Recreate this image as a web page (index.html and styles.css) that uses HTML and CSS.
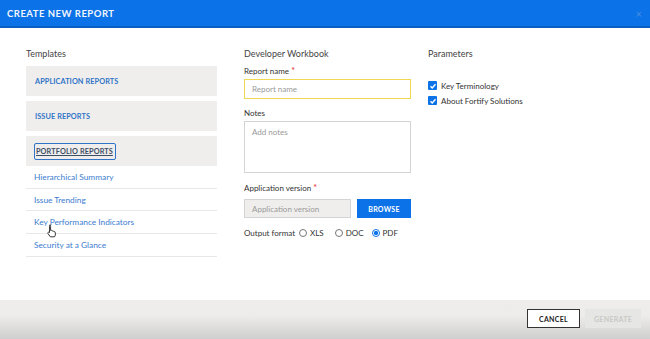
FILE: index.html
```
<!DOCTYPE html>
<html>
<head>
	<title>Create New Report</title>
	<meta charset="utf-8">
	<link rel="stylesheet" href="styles.css">
</head>
<body>
	<div class="dialog">
		<div class="header">
			<h1>Create New Report</h1>
			<span class="close">&times;</span>
		</div>

		<div class="body">
			<div class="col templates">
				<h2>Templates</h2>
				<div class="group">Application Reports</div>
				<div class="group">Issue Reports</div>
				<div class="group open"><span class="focus">Portfolio Reports</span></div>
				<ul class="items">
					<li>Hierarchical Summary</li>
					<li>Issue Trending</li>
					<li class="hover">Key Performance Indicators
						<svg class="cursor" width="12" height="14" viewBox="0 0 12 14">
							<path d="M3.5 1.2c.7 0 1.1.5 1.1 1.1v4.2l.3-.1c.6-.2 1.1.1 1.3.5.5-.3 1.1-.1 1.4.4.5-.2 1.2 0 1.4.6l.3 1.1c.3 1.5 0 2.8-.8 3.8H4.3L2 9.6c-.4-.6-.2-1.2.3-1.4.4-.2.9 0 1.2.3V2.3c0-.6.4-1.1 1-1.1z" fill="#fff" stroke="#222" stroke-width=".9"/>
						</svg>
					</li>
					<li>Security at a Glance</li>
				</ul>
			</div>

			<div class="col form">
				<h2>Developer Workbook</h2>
				<label>Report name <span class="req">*</span></label>
				<div class="input active">Report name</div>
				<label class="notes-label">Notes</label>
				<div class="input textarea">Add notes</div>
				<label class="ver-label">Application version <span class="req">*</span></label>
				<div class="row">
					<div class="input disabled">Application version</div>
					<button class="browse">Browse</button>
				</div>
				<div class="format">
					Output format
					<span class="radio"></span> XLS
					<span class="radio"></span> DOC
					<span class="radio on"></span> PDF
				</div>
			</div>

			<div class="col params">
				<h2>Parameters</h2>
				<div class="check"><span class="box">
					<svg width="8" height="8" viewBox="0 0 8 8"><path d="M1.5 4.2l1.7 1.7 3.3-3.6" fill="none" stroke="#fff" stroke-width="1.4"/></svg>
				</span>Key Terminology</div>
				<div class="check"><span class="box">
					<svg width="8" height="8" viewBox="0 0 8 8"><path d="M1.5 4.2l1.7 1.7 3.3-3.6" fill="none" stroke="#fff" stroke-width="1.4"/></svg>
				</span>About Fortify Solutions</div>
			</div>
		</div>

		<div class="footer">
			<button class="cancel">Cancel</button>
			<button class="generate">Generate</button>
		</div>
	</div>
</body>
</html>
```

FILE: styles.css
```
* {
	box-sizing: border-box;
}

body {
	margin: 0px;
	font-family: "Lato", "Open Sans", sans-serif;
	color: #333;
	background: #fff;
}

.dialog {
	width: 650px;
	height: 339px;
	display: flex;
	flex-direction: column;
}

.header {
	height: 28px;
	background: #0b72e7;
	border-bottom: 2px solid #0a5fc4;
	display: flex;
	align-items: center;
	justify-content: space-between;
	padding: 0px 7px;
}

h1 {
	margin: 0px;
	font-size: 9.5px;
	font-weight: 700;
	letter-spacing: 0.5px;
	text-transform: uppercase;
	color: #f2f6fc;
}

.close {
	color: #4a8ee0;
	font-size: 11px;
	margin-right: 1px;
}

.body {
	flex: 1;
	display: flex;
	padding: 20px 0px 0px 26px;
}

h2 {
	margin: 0px 0px 6px;
	font-size: 9px;
	font-weight: 400;
	color: #444;
	height: 12px;
	line-height: 12px;
}

.templates {
	width: 191px;
}

.group {
	background: #efeeec;
	height: 30px;
	margin-bottom: 5px;
	display: flex;
	align-items: center;
	padding-left: 9px;
	font-size: 7.3px;
	font-weight: 700;
	text-transform: uppercase;
	color: #2f74c8;
	letter-spacing: 0.1px;
}

.group.open {
	margin-bottom: 0px;
	padding-left: 8px;
}

.focus {
	border: 1.5px solid #2f74c8;
	border-radius: 2px;
	padding: 3px 2px 3px 1px;
	color: #3c4d66;
	text-decoration: underline;
}

.items {
	list-style: none;
	margin: 0px;
	padding: 0px;
}

.items li {
	height: 22.7px;
	border-bottom: 1px solid #e8e8e8;
	display: flex;
	align-items: center;
	padding-left: 8px;
	font-size: 8.3px;
	color: #3a7cd0;
	position: relative;
}

.cursor {
	position: absolute;
	left: 20px;
	top: 13px;
}

.form {
	width: 167px;
	margin-left: 27px;
	display: flex;
	flex-direction: column;
}

label {
	font-size: 8px;
	color: #333;
	height: 10px;
	line-height: 10px;
	margin-bottom: 3px;
}

.req {
	color: #e0262b;
	font-size: 9px;
	vertical-align: top;
}

.input {
	height: 20px;
	border: 1px solid #d4d4d4;
	font-size: 8px;
	color: #9a9a9a;
	padding: 0px 7px;
	display: flex;
	align-items: center;
}

.input.active {
	border-color: #f0d850;
}

.notes-label {
	margin-top: 9px;
}

.textarea {
	height: 52px;
	align-items: flex-start;
	padding-top: 5px;
}

.ver-label {
	margin-top: 10px;
	margin-bottom: 6px;
}

.row {
	display: flex;
	gap: 6px;
}

.input.disabled {
	width: 107px;
	height: 19px;
	background: #efeeec;
}

.browse {
	flex: 1;
	height: 19px;
	border: 0px;
	background: #0b72e7;
	color: #fff;
	font-family: inherit;
	font-size: 7px;
	font-weight: 700;
	text-transform: uppercase;
	letter-spacing: 0.3px;
}

.format {
	margin-top: 10px;
	font-size: 8px;
	color: #333;
	display: flex;
	align-items: center;
	gap: 3px;
}

.radio {
	width: 8px;
	height: 8px;
	border: 1px solid #777;
	border-radius: 50%;
	margin-left: 1px;
}

.format .radio:nth-of-type(2) {
	margin-left: 8px;
}

.radio.on {
	margin-left: 5px;
	border-color: #0b72e7;
	background: radial-gradient(circle, #0b72e7 45%, #fff 55%);
}

.params {
	margin-left: 17px;
}

.params h2 {
	margin-bottom: 18px;
}

.check {
	display: flex;
	align-items: center;
	font-size: 8px;
	color: #333;
	height: 15px;
}

.box {
	width: 9px;
	height: 9px;
	background: #0b72e7;
	border-radius: 1px;
	margin-right: 4px;
	display: flex;
	align-items: center;
	justify-content: center;
}

.footer {
	height: 39px;
	background: linear-gradient(#eeedeb 0%, #edecea 40%, #cfcfcf 100%);
	display: flex;
	justify-content: flex-end;
	align-items: flex-start;
	padding: 9px 9px 0px 0px;
	gap: 5px;
}

.footer button {
	height: 19px;
	font-family: inherit;
	font-size: 7px;
	font-weight: 700;
	text-transform: uppercase;
	letter-spacing: 0.3px;
}

.cancel {
	width: 53px;
	background: #fff;
	border: 1.5px solid #333;
	color: #222;
}

.generate {
	width: 56px;
	background: #e6e6e4;
	border: 0px;
	color: #c9c9c7;
}
```
